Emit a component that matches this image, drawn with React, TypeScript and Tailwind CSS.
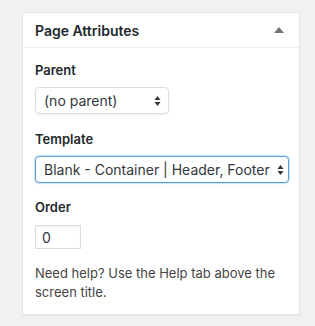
import React from 'react';

const Arrows = () => (
  <svg width="7" height="12" viewBox="0 0 7 12" className="shrink-0">
    <path d="M3.5 1L6.5 5H0.5Z" fill="#32373c" />
    <path d="M3.5 11L6.5 7H0.5Z" fill="#32373c" />
  </svg>
);

const App = () => {
  return (
    <div className="w-[315px] h-[326px] bg-[#f1f1f1] pt-3 pl-[22px]" style={{ fontFamily: 'Inter, "Noto Sans", sans-serif' }}>
      <div className="w-[278px] h-[303px] bg-white border border-[#e5e5e5] shadow-[0_1px_1px_rgba(0,0,0,0.04)]">
        <div className="flex items-center justify-between h-[35px] px-3 border-b border-[#eeeeee]">
          <h2 className="text-[14px] font-semibold text-[#23282d]">Page Attributes</h2>
          <svg width="10" height="6" viewBox="0 0 10 6" className="mr-[3px]">
            <path d="M5 0L10 6H0Z" fill="#72777c" />
          </svg>
        </div>
        <div className="px-3 pt-[13px] text-[13px] text-[#444]">
          <p className="font-semibold text-[#23282d] leading-[18px]">Parent</p>
          <div className="mt-[8px] w-[134px] h-[27px] rounded-[4px] border border-[#ddd] shadow-[0_1px_2px_rgba(0,0,0,0.07)] flex items-center justify-between pl-2 pr-[7px] text-[14px] text-[#32373c]">
            <span>(no parent)</span>
            <Arrows />
          </div>
          <p className="mt-[16px] font-semibold text-[#23282d] leading-[18px]">Template</p>
          <div className="mt-[8px] w-[254px] h-[27px] rounded-[4px] border border-[#5b9dd9] shadow-[0_0_2px_rgba(30,140,190,0.8)] flex items-center justify-between pl-2 pr-[4px] text-[14px] text-[#32373c]">
            <span className="whitespace-nowrap">Blank - Container | Header, Footer</span>
            <Arrows />
          </div>
          <p className="mt-[15px] font-semibold text-[#23282d] leading-[18px]">Order</p>
          <div className="mt-[9px] w-[46px] h-[24px] border border-[#ddd] shadow-[inset_0_1px_2px_rgba(0,0,0,0.07)] flex items-center pl-[6px] text-[14px] text-[#32373c]">
            0
          </div>
          <p className="mt-[15px] leading-[19px] text-[#444] pr-2">
            Need help? Use the Help tab above the screen title.
          </p>
        </div>
      </div>
    </div>
  );
};

export default App;
